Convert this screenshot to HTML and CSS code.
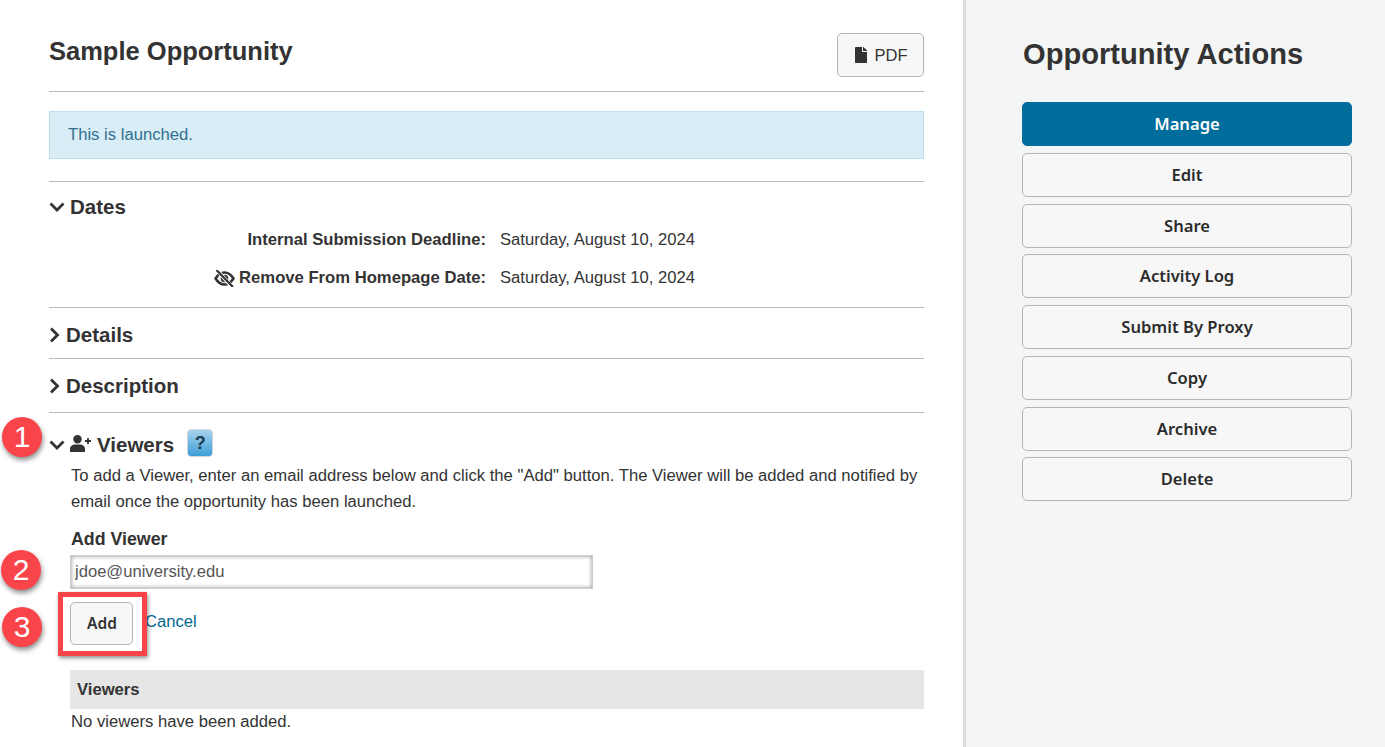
FILE: index.html
```html
<!DOCTYPE html>
<html lang="en">
<head>
<meta charset="utf-8">
<title>Sample Opportunity</title>
<link rel="stylesheet" href="styles.css">
</head>
<body>
<div class="layout">
  <main class="main">
    <header class="page-head">
      <h1>Sample Opportunity</h1>
      <button class="btn pdf"><svg class="i-file" viewBox="0 0 384 512"><path d="M224 136V0H24C10.700 0 0 10.700 0 24v464c0 13.300 10.700 24 24 24h336c13.300 0 24-10.700 24-24V160H248c-13.200 0-24-10.800-24-24zm160-14.100v6.100H256V0h6.100c6.400 0 12.500 2.500 17 7l97.900 98c4.500 4.500 7 10.600 7 16.900z"/></svg>PDF</button>
    </header>
    <div class="alert">This is launched.</div>
    <section class="sec sec-dates">
      <h2><svg class="chev" viewBox="0 0 16 10"><path d="M1.500 1.500 8 8l6.500-6.500"/></svg>Dates</h2>
      <dl class="dates">
        <dt>Internal Submission Deadline:</dt><dd>Saturday, August 10, 2024</dd>
        <dt><svg class="i-eye" viewBox="0 0 24 20"><path d="M1.500 10c3-5 6.500-7 10.500-7s7.500 2 10.500 7c-3 5-6.500 7-10.500 7s-7.500-2-10.500-7z" fill="none" stroke="#333" stroke-width="3"/><circle cx="12" cy="10" r="4.500" fill="#333"/><path d="M3 0l18 20" stroke="#fff" stroke-width="4.500"/><path d="M2.500 0 22 20" stroke="#333" stroke-width="2.600"/></svg>Remove From Homepage Date:</dt><dd>Saturday, August 10, 2024</dd>
      </dl>
    </section>
    <section class="sec sec-closed">
      <h2><svg class="chev-r" viewBox="0 0 11 16"><path d="M2 1.500 8.500 8 2 14.500"/></svg>Details</h2>
    </section>
    <section class="sec sec-closed sec-desc">
      <h2><svg class="chev-r" viewBox="0 0 11 16"><path d="M2 1.500 8.500 8 2 14.500"/></svg>Description</h2>
    </section>
    <section class="sec sec-viewers">
      <h2 class="viewers-head"><svg class="chev" viewBox="0 0 16 10"><path d="M1.500 1.500 8 8l6.500-6.500"/></svg><svg class="i-user" viewBox="0 0 21 17"><circle cx="7.500" cy="4.200" r="4.200"/><path d="M0 17v-3C0 11 2.500 9.500 5 9.500h5c2.500 0 5 1.500 5 4.500v3z"/><path d="M15 6h6M18 3v6" stroke="#333" stroke-width="1.800"/></svg>Viewers<span class="help">?</span>
        <span class="step step-1">1</span></h2>
      <div class="viewers-body">
        <p>To add a Viewer, enter an email address below and click the "Add" button. The Viewer will be added and notified by email once the opportunity has been launched.</p>
        <label class="field-label" for="v">Add Viewer</label>
        <div class="input-wrap"><input id="v" class="input" value="jdoe@university.edu"><span class="step step-2">2</span></div>
        <div class="actions">
          <button class="btn add">Add</button><a class="cancel" href="#">Cancel</a>
          <span class="highlight"></span>
          <span class="step step-3">3</span>
        </div>
        <div class="table-head">Viewers</div>
        <div class="empty">No viewers have been added.</div>
      </div>
    </section>
  </main>
  <aside class="side">
    <h2>Opportunity Actions</h2>
    <nav class="side-btns">
      <a class="act primary">Manage</a>
      <a class="act">Edit</a>
      <a class="act">Share</a>
      <a class="act">Activity Log</a>
      <a class="act">Submit By Proxy</a>
      <a class="act">Copy</a>
      <a class="act">Archive</a>
      <a class="act">Delete</a>
    </nav>
  </aside>
</div>
</body>
</html>
```
FILE: styles.css
```css
* { box-sizing: border-box; }
html, body { margin: 0; height: 100%; overflow: hidden; }
body { font-family: "Liberation Sans", Arial, sans-serif; color: #333; font-size: 16.65px; background: #fff; }
.layout { display: flex; height: 747px; }
.main { width: 963px; padding: 0 39px 0 49px; flex: none; }
.side { flex: 1; background: #f4f6f6; border-left: 3px solid #dcdcdc; padding: 0 33px 0 56px; }
.page-head { display: flex; justify-content: space-between; height: 92px; padding-top: 34px; border-bottom: 1px solid #bbb; }
h1 { margin: 0; font-size: 25.5px; line-height: 35px; font-weight: 700; }
.btn { font-family: "Liberation Sans", Arial, sans-serif; background: #f7f7f7; border: 1px solid #b5b5b5; border-radius: 5px; color: #333; }
.pdf { width: 87px; height: 44px; margin-top: -1px; font-size: 16.5px; display: flex; align-items: center; justify-content: center; gap: 8px; padding: 0 0 0 1px; }
.i-file { width: 12px; height: 16px; fill: #333; }
.alert { margin-top: 19px; height: 48px; background: #d9edf7; border: 1px solid #bce0f0; color: #31708f; line-height: 45px; padding-left: 18px; }
.sec { border-top: 1px solid #bbb; }
.sec-dates { margin-top: 22px; height: 126px; padding-top: 13px; }
h2 { margin: 0; font-size: 20.5px; line-height: 24px; font-weight: 700; display: flex; align-items: center; }
.chev { width: 16px; height: 10px; margin-right: 5px; fill: none; stroke: #333; stroke-width: 2.800; }
.chev-r { width: 11px; height: 16px; margin-right: 6px; fill: none; stroke: #333; stroke-width: 2.800; }
.dates { margin: 0; display: grid; grid-template-columns: 437px 1fr; column-gap: 14px; row-gap: 20px; padding-top: 12px; line-height: 18px; }
.dates dt { font-weight: 700; text-align: right; display: flex; justify-content: flex-end; align-items: center; }
.dates dd { margin: 0; }
.i-eye { width: 21px; height: 17px; margin-right: 4px; }
.sec-closed { height: 51px; padding-top: 15px; }
.sec-desc { height: 54px; }
.sec-viewers { padding-top: 20px; }
.viewers-head { position: relative; }
.i-user { width: 21px; height: 17px; fill: #333; margin-right: 6px; margin-top: -4px; }
.help { width: 26px; height: 28px; margin: -5px 0 -1px 13px; border-radius: 4px; background: linear-gradient(#a7d3ee, #3d9fd8); border: 1px solid #cfd8dd; color: #1f3a50; font-size: 18px; font-weight: 700; display: flex; align-items: center; justify-content: center; }
.step { position: absolute; width: 40px; height: 40px; border-radius: 50%; background: #f94449; color: #fff; font-size: 30px; font-weight: 400; line-height: 40px; text-align: center; box-shadow: 1px 3px 5px rgba(0,0,0,.45); }
.step-1 { left: -47px; top: -16px; }
.step-2 { left: -69px; top: -5px; }
.step-3 { left: -68px; top: 5px; }
.viewers-body { padding: 6px 0 0 21px; }
.viewers-body p { margin: 0; padding-left: 1px; line-height: 26px; }
.field-label { display: block; font-weight: 700; margin-top: 14px; padding-left: 1px; line-height: 20px; font-size: 17.8px; }
.input-wrap { position: relative; margin-top: 6px; width: 523px; }
.input { display: block; width: 523px; height: 34px; border: 1px solid #ccc; box-shadow: inset 0 0 4px rgba(0,0,0,.45); padding: 0 4px; font: 16.6px "Liberation Sans", Arial, sans-serif; color: #555; }
.actions { position: relative; margin-top: 13px; display: flex; align-items: center; height: 43px; }
.add { width: 63px; height: 43px; font-size: 15.500px; font-weight: 600; padding: 0 0 1px 1px; font-family: "Noto Sans", sans-serif; }
.cancel { margin-left: 12px; color: #00688f; text-decoration: none; margin-top: -3px; }
.highlight { position: absolute; left: -12px; top: -10px; width: 89px; height: 64px; border: 5px solid #f94449; box-shadow: 1px 2px 4px rgba(0,0,0,.45); }
.table-head { margin-top: 25px; height: 39px; background: #e6e6e6; padding-left: 7px; line-height: 39px; font-weight: 700; }
.empty { margin-top: 4px; padding-left: 1px; line-height: 18px; }
.side h2 { font-size: 29.100px; line-height: 36px; padding: 36px 0 0 1px; height: 102px; display: block; }
.side-btns { display: flex; flex-direction: column; gap: 6.750px; }
.act { height: 44px; display: flex; align-items: center; justify-content: center; padding-bottom: 1px; border: 1px solid #b5b5b5; border-radius: 5px; background: #f7f7f7; font-family: "Noto Sans", sans-serif; font-weight: 600; font-size: 16.600px; color: #2b2b2b; }
.primary { background: #006d9c; border-color: #006d9c; color: #fff; }
```
